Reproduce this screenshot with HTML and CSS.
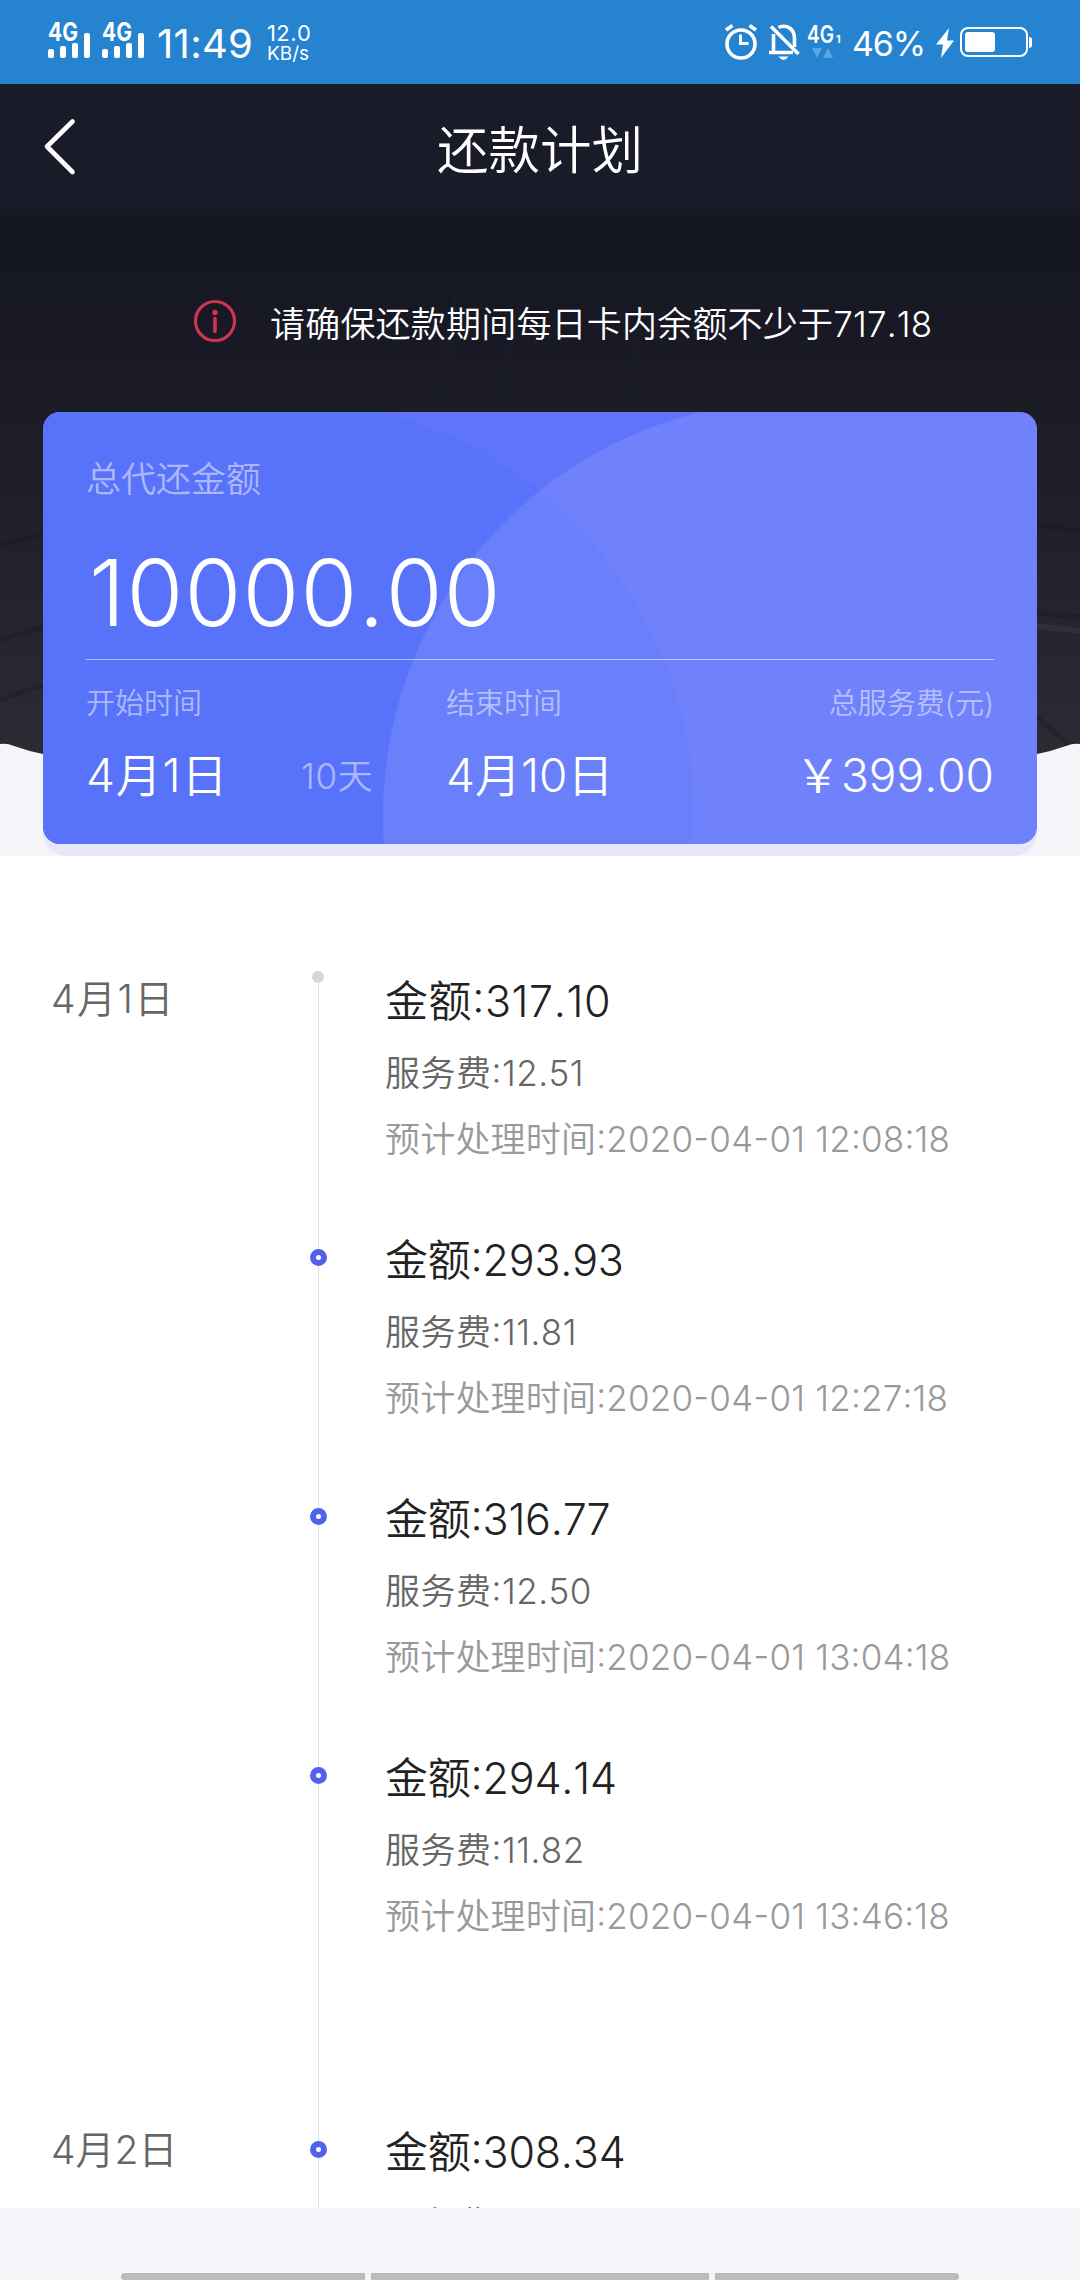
FILE: index.html
```html
<!DOCTYPE html>
<html lang="zh-CN">
<head>
<meta charset="utf-8">
<title>还款计划</title>
<link rel="stylesheet" href="styles.css">
</head>
<body>
<div class="status">
  <svg class="signal" viewBox="0 0 42 36"><text x="0" y="19" class="sig-text" textLength="30" lengthAdjust="spacingAndGlyphs">4G</text><rect x="0" y="27" width="6" height="9" rx="2"/><rect x="12" y="24" width="6" height="12" rx="2"/><rect x="24" y="21" width="6" height="15" rx="2"/><rect x="36" y="11" width="6" height="25" rx="2"/></svg>
  <svg class="signal" viewBox="0 0 42 36"><text x="0" y="19" class="sig-text" textLength="30" lengthAdjust="spacingAndGlyphs">4G</text><rect x="0" y="27" width="6" height="9" rx="2"/><rect x="12" y="24" width="6" height="12" rx="2"/><rect x="24" y="21" width="6" height="15" rx="2"/><rect x="36" y="11" width="6" height="25" rx="2"/></svg>
  <span class="clock">11:49</span>
  <div class="speed"><span class="speed-num">12.0</span><span class="speed-unit">KB/s</span></div>
  <div class="status-right">
    <svg class="alarm" viewBox="0 0 32 36" fill="none" stroke="#fff"><circle cx="16" cy="20" r="14" stroke-width="3.6"/><path d="M15.5 10.5V19.500H23.5" stroke-width="3"/><path d="M1 6L7.5 1.5M31 6L24.500 1.500" stroke-width="3.6"/></svg>
    <svg class="bell" viewBox="0 0 30 36" fill="none" stroke="#fff" stroke-width="3.6"><path d="M9.500 3.500C12 2 17 1.500 20.500 4Q25.500 7.500 25.500 14V23M4.500 10V28M0 28.500H24"/><path d="M2 2.500L29.500 30"/><path d="M9.500 32.500H19.500Q17 36 14.500 36T9.500 32.500Z" fill="#fff" stroke="none"/></svg>
    <svg class="net" viewBox="0 0 34 36"><text x="0" y="19" class="net-text" textLength="27" lengthAdjust="spacingAndGlyphs">4G</text><text x="29" y="19" class="net-sub">1</text><path d="M5 24H15L10 34Z M16 34H26L21 24Z" fill="#5ba6e2"/></svg>
    <span class="percent">46%</span>
    <svg class="bolt" viewBox="0 0 18 30"><path d="M13 0L0 16.500H7L5 30L18 12.500H11Z"/></svg>
    <svg class="battery" viewBox="0 0 72 30"><rect x="1" y="1" width="66" height="28" rx="7" fill="none" stroke="#fff" stroke-width="2"/><rect x="5" y="5" width="30" height="20" rx="3"/><path d="M69 10Q72 10 72 13V18Q72 21 69 21Z"/></svg>
  </div>
</div>
<header class="titlebar">
  <svg class="back" viewBox="0 0 32 56"><path d="M28.500 2.500L3 27.500L28.500 53" fill="none" stroke="#fff" stroke-width="4.600" stroke-linecap="round" stroke-linejoin="round"/></svg>
  <h1 class="title">还款计划</h1>
</header>
<section class="hero">
  <svg class="wave" viewBox="0 0 1080 651" preserveAspectRatio="none">
    <g fill="none" stroke="#151727" stroke-opacity=".35" stroke-width="5"><path d="M0 340L43 330M0 435L43 422M0 495L43 480M1037 320L1080 326M1037 408L1080 412M1037 512L1080 550"/><path d="M455 90L440 207M520 95L500 207M645 85L628 207" stroke="#1c2035"/></g>
    <path d="M1037 421L1080 426" stroke="#393844" stroke-opacity=".5" stroke-width="6"/>
    <path d="M0 539Q7 538 14 541Q28 546 43 549H1037Q1052 546 1066 541Q1073 538 1080 539V651H0Z" fill="#f4f4f9"/>
  </svg>
  <div class="notice">
    <svg class="info" viewBox="0 0 44 44"><circle cx="22" cy="22" r="19.500" fill="none" stroke="#d0344f" stroke-width="3.200"/><circle cx="22" cy="13.500" r="2.700" fill="#d0344f"/><path d="M22 19.500V32.500" stroke="#d0344f" stroke-width="3.600" stroke-linecap="round"/></svg>
    <p class="notice-text">请确保还款期间每日卡内余额不少于717.18</p>
  </div>
  <div class="card">
    <svg class="card-bg" viewBox="0 0 994 432"><path d="M0 0H337A415 415 0 0 1 650 432H0Z" fill="#5972fa"/><path d="M994 0H658A415 415 0 0 0 341 432H994Z" fill="#fff" fill-opacity=".1"/></svg>
    <div class="total-label">总代还金额</div>
    <div class="total">10000.00</div>
    <div class="facts">
      <div class="fact fact-start"><span class="fact-label">开始时间</span><span class="fact-value">4月1日</span></div>
      <div class="days">10天</div>
      <div class="fact fact-end"><span class="fact-label">结束时间</span><span class="fact-value">4月10日</span></div>
      <div class="fact fact-fee"><span class="fact-label">总服务费(元)</span><span class="fact-value">￥399.00</span></div>
    </div>
  </div>
  <div class="card-shadow"></div>
</section>
<main class="plan">
  <section class="day">
    <h2 class="date date-first">4月1日</h2>
    <ol class="items">
      <li class="item first"><div class="amount">金额:317.10</div><div class="fee">服务费:12.51</div><div class="time">预计处理时间:2020-04-01 12:08:18</div></li>
      <li class="item"><div class="amount">金额:293.93</div><div class="fee">服务费:11.81</div><div class="time">预计处理时间:2020-04-01 12:27:18</div></li>
      <li class="item"><div class="amount">金额:316.77</div><div class="fee">服务费:12.50</div><div class="time">预计处理时间:2020-04-01 13:04:18</div></li>
      <li class="item last"><div class="amount">金额:294.14</div><div class="fee">服务费:11.82</div><div class="time">预计处理时间:2020-04-01 13:46:18</div></li>
    </ol>
  </section>
  <section class="day">
    <h2 class="date">4月2日</h2>
    <ol class="items">
      <li class="item"><div class="amount">金额:308.34</div><div class="fee">服务费</div></li>
    </ol>
  </section>
</main>
<footer class="navbar"><i class="nav-side nav-left"></i><i class="nav-mid"></i><i class="nav-side nav-right"></i></footer>
</body>
</html>
```
FILE: styles.css
```css
*, *::before { box-sizing: border-box; margin: 0; padding: 0; }
body {
  width: 1080px;
  height: 2280px;
  overflow: hidden;
  display: flex;
  flex-direction: column;
  background: #f4f4f9;
  font-family: Inter, "Noto Sans CJK SC", sans-serif;
  font-weight: 350;
  font-kerning: none;
  color: #222;
}
svg { display: block; flex: none; overflow: visible; }

.status {
  height: 84px;
  flex: none;
  display: flex;
  align-items: flex-start;
  padding: 0 48px;
  background: #2583d0;
  color: #fff;
  fill: #fff;
}
.signal { width: 42px; height: 36px; margin: 22px 12px 0 0; }
.sig-text { font-size: 25px; font-weight: 700; }
.clock { font-size: 40px; line-height: 60px; font-weight: 400; width: 100px; margin: 14px 0 0 1px; white-space: nowrap; letter-spacing: .3px; }
.speed { display: flex; flex-direction: column; margin: 22px 0 0 10px; font-weight: 400; }
.speed-num { font-size: 22px; line-height: 22px; letter-spacing: .4px; }
.speed-unit { font-size: 19px; line-height: 19px; }
.status-right { display: flex; margin-left: auto; }
.alarm { width: 32px; height: 36px; margin: 24px 12px 0 0; }
.bell { width: 30px; height: 36px; margin: 24px 8px 0 0; }
.net { width: 34px; height: 36px; margin: 24px 11px 0 0; }
.net-text { font-size: 24px; font-weight: 600; }
.net-sub { font-size: 11px; font-weight: 700; }
.percent { font-size: 34px; line-height: 50px; font-weight: 400; width: 84px; margin-top: 19px; white-space: nowrap; letter-spacing: -1.2px; }
.bolt { width: 18px; height: 30px; margin: 28px 6px 0 0; }
.battery { width: 72px; height: 30px; margin: 27px 0 0; }

.titlebar {
  height: 121px;
  flex: none;
  display: grid;
  grid-template-columns: 132px 1fr 132px;
  align-items: center;
  background: #1a1b29;
}
.back { width: 32px; height: 56px; margin-left: 44px; margin-top: 5px; }
.title { font-size: 51.500px; font-weight: 350; line-height: 70px; text-align: center; color: #fff; margin-top: 11px; }

.hero {
  position: relative;
  height: 651px;
  flex: none;
  padding: 0 43px;
  background: linear-gradient(#191a28 0, #151722 8px, #151722 60px, #1b1b26 190px, #22202a 340px, #2c2a33 540px);
}
.wave { position: absolute; inset: 0; width: 1080px; height: 651px; }
.notice { position: relative; height: 207px; display: flex; align-items: flex-start; padding: 94px 0 0 150px; }
.info { width: 44px; height: 44px; }
.notice-text { margin-left: 33px; font-size: 35px; line-height: 50px; color: #fff; white-space: nowrap; letter-spacing: .2px; }
.card {
  position: relative;
  z-index: 1;
  height: 432px;
  border-radius: 17px;
  overflow: hidden;
  background: #5f74fb;
  padding: 42px 43px 0;
  color: #fff;
}
.card-bg { position: absolute; inset: 0; width: 994px; height: 432px; }
.total-label { position: relative; font-size: 35px; line-height: 50px; color: rgba(255, 255, 255, .5); }
.total { position: relative; font-size: 92px; line-height: 110px; height: 156px; padding: 34px 0 0 3px; letter-spacing: 1.2px; border-bottom: 1px solid rgba(255, 255, 255, .55); white-space: nowrap; }
.facts { position: relative; display: flex; padding-top: 24px; }
.fact { display: flex; flex-direction: column; gap: 21px; }
.fact-start { width: 215px; }
.fact-start .fact-value { letter-spacing: .8px; }
.fact-label { font-size: 29px; line-height: 40px; color: rgba(255, 255, 255, .5); }
.fact-value { font-size: 46px; line-height: 60px; white-space: nowrap; }
.days { width: 145px; padding-top: 70px; font-size: 35px; line-height: 44px; color: rgba(255, 255, 255, .5); letter-spacing: .7px; }
.fact-fee { margin-left: auto; text-align: right; }
.card-shadow { height: 24px; margin-top: -12px; border-radius: 0 0 28px 28px; background: #e6e7f8; position: relative; }

.plan { height: 1352px; flex: none; overflow: hidden; background: #fff; padding-top: 115px; }
.day { display: grid; grid-template-columns: 318px 1fr; }
.date { padding: 0 0 0 51px; font-size: 39px; line-height: 55px; font-weight: 350; color: #666; }
.date-first { letter-spacing: 1.5px; }
.items { list-style: none; }
.item { position: relative; height: 259px; padding-left: 66px; border-left: 1px solid #e2e2e4; white-space: nowrap; font-feature-settings: "case" 1; }
.item.first { border-image: linear-gradient(transparent 6px, #e2e2e4 6px) 1; }
.item.last { height: 374px; }
.item::before {
  content: "";
  position: absolute;
  left: -9px;
  top: 19px;
  width: 17px;
  height: 17px;
  border: 6px solid #5062ec;
  border-radius: 50%;
  background: #fff;
}
.item.first::before { left: -7px; top: 0; width: 12px; height: 12px; border: 0; background: #d6d6d6; }
.amount { font-size: 43px; line-height: 60px; color: #222; letter-spacing: -.2px; }
.first .amount { letter-spacing: .6px; }
.fee { margin-top: 17px; font-size: 35px; line-height: 50px; color: #666; letter-spacing: .5px; }
.time { margin-top: 16px; font-size: 35px; line-height: 50px; color: #999; letter-spacing: .2px; }

.navbar { flex: 1; display: flex; align-items: flex-end; justify-content: center; gap: 6px; }
.nav-side, .nav-mid { height: 7px; background: #bbb; }
.nav-side { width: 244px; }
.nav-mid { width: 338px; }
.nav-left { border-radius: 4px 0 0 4px; }
.nav-right { border-radius: 0 4px 4px 0; }
```
